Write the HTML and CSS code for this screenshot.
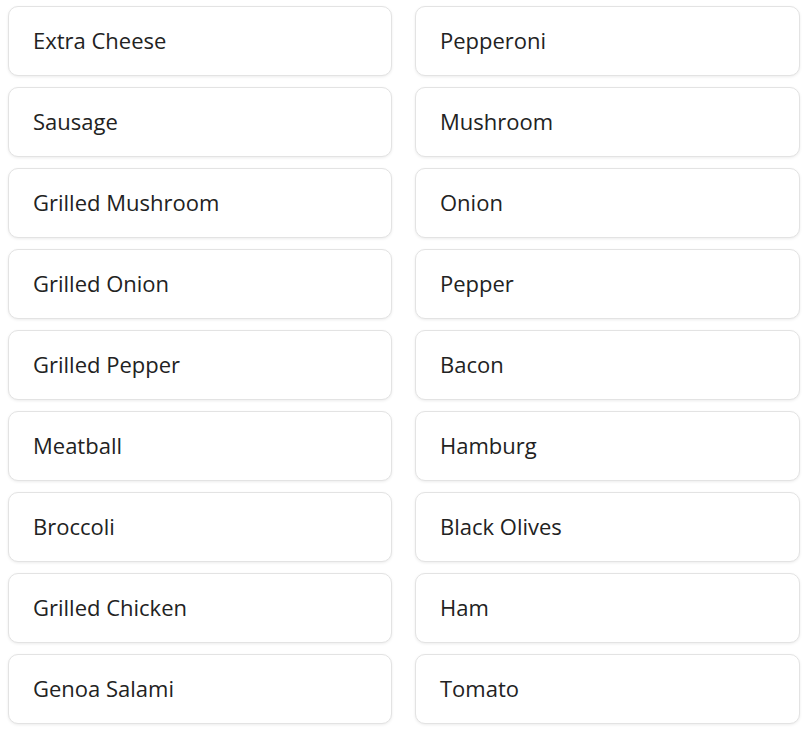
FILE: index.html
```html
<html>
<link rel="stylesheet" href="styles.css">

<head>
    <title>Toppings</title>
</head>

<body>
    <div class="grade">
        <div class="item">Extra Cheese</div>
        <div class="item">Pepperoni</div>
        <div class="item">Sausage</div>
        <div class="item">Mushroom</div>
        <div class="item">Grilled Mushroom</div>
        <div class="item">Onion</div>
        <div class="item">Grilled Onion</div>
        <div class="item">Pepper</div>
        <div class="item">Grilled Pepper</div>
        <div class="item">Bacon</div>
        <div class="item">Meatball</div>
        <div class="item">Hamburg</div>
        <div class="item">Broccoli</div>
        <div class="item">Black Olives</div>
        <div class="item">Grilled Chicken</div>
        <div class="item">Ham</div>
        <div class="item">Genoa Salami</div>
        <div class="item">Tomato</div>
    </div>
</body>

</html>
```

FILE: styles.css
```css
body {
    margin: 0;
    padding: 6px 4px 0 8px;
    background-color: white;
    font-family: "Open Sans", sans-serif;
}

.grade {
    display: grid;
    grid-template-columns: 384px 385px;
    column-gap: 23px;
    row-gap: 11px;
}

.item {
    height: 70px;
    box-sizing: border-box;
    padding-left: 24px;
    padding-bottom: 2px;
    display: flex;
    align-items: center;
    font-size: 22px;
    color: #222;
    background-color: white;
    border: 1px solid #e3e3e3;
    border-radius: 10px;
    box-shadow: 0 1px 3px rgba(0, 0, 0, 0.08);
}
```
